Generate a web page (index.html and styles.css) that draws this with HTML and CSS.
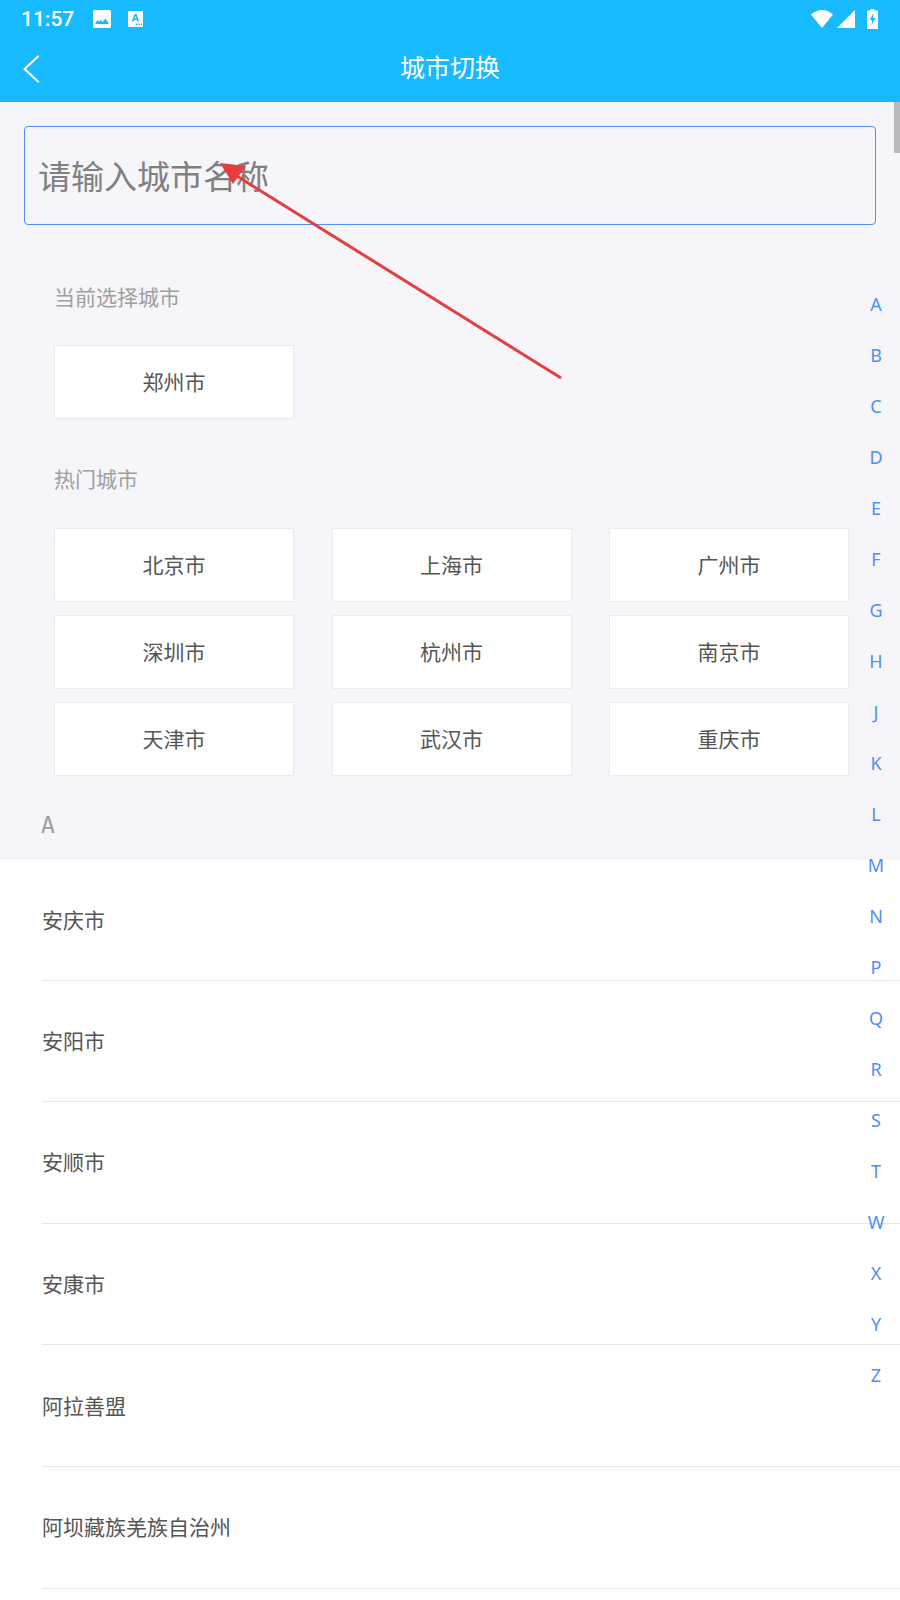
FILE: index.html
```html
<!DOCTYPE html>
<html lang="zh-CN">
<head>
    <meta charset="UTF-8">
    <meta name="viewport" content="width=device-width, initial-scale=1.0">
    <title>城市切换</title>
    <link rel="stylesheet" href="styles.css">
</head>
<body>
    <header class="top">
        <div class="status">
            <span class="time">11:57</span>
            <svg class="st-pic" width="18" height="18" viewBox="0 0 18 18"><path fill="#fff" fill-rule="evenodd" d="M1.500 0h15A1.500 1.500 0 0 1 18 1.500v15a1.500 1.500 0 0 1-1.500 1.500h-15A1.500 1.500 0 0 1 0 16.500v-15A1.500 1.500 0 0 1 1.500 0zM2 14h14l-3.500-5.500-3 3.500-2-2-1.500 1.500-1.500-1.500z"/></svg>
            <svg class="st-a" width="15" height="16" viewBox="0 0 15 16"><path fill="#fff" fill-rule="evenodd" d="M1 0h13a1 1 0 0 1 1 1v14a1 1 0 0 1-1 1H1a1 1 0 0 1-1-1V1a1 1 0 0 1 1-1zM6.500 3 3.800 10.500h1.700l.5-1.500h3l.5 1.500h1.700L8.500 3zM6.500 7.600 7.500 4.800 8.500 7.600zM8 12.500h1.500V14H8zM10.500 12.500H12V14h-1.500zM13 12.500h1V14h-1z"/></svg>
            <span class="st-right">
                <svg width="22" height="18" viewBox="0 0 22 18"><path fill="#fff" d="M0 4.500C3 1.800 6.800 0 11 0s8 1.800 11 4.500L11 18z"/></svg>
                <svg width="18" height="18" viewBox="0 0 18 18"><path fill="#fff" d="M18 0v18H0z"/></svg>
                <svg width="11" height="20" viewBox="0 0 11 20"><path fill="#fff" fill-rule="evenodd" d="M3.500 0h4v1.500H11V20H0V1.500h3.500zM6.500 4 2.800 11h2.400l-.7 5.500L8.400 9H6z"/></svg>
            </span>
        </div>
        <div class="bar">
            <svg class="back" width="18" height="28" viewBox="0 0 18 28"><path d="M16 1.500 2.500 14 16 26.500" fill="none" stroke="#fff" stroke-width="2.200" stroke-linecap="round" stroke-linejoin="round"/></svg>
            <h1>城市切换</h1>
        </div>
    </header>

    <main>
        <div class="search">
            <input type="text" placeholder="请输入城市名称">
        </div>

        <section class="hot">
            <h2>当前选择城市</h2>
            <div class="grid">
                <a class="card">郑州市</a>
            </div>
            <h2 class="second">热门城市</h2>
            <div class="grid">
                <a class="card">北京市</a>
                <a class="card">上海市</a>
                <a class="card">广州市</a>
                <a class="card">深圳市</a>
                <a class="card">杭州市</a>
                <a class="card">南京市</a>
                <a class="card">天津市</a>
                <a class="card">武汉市</a>
                <a class="card">重庆市</a>
            </div>
        </section>

        <div class="letter">A</div>
        <ul class="cities">
            <li>安庆市</li>
            <li>安阳市</li>
            <li>安顺市</li>
            <li>安康市</li>
            <li>阿拉善盟</li>
            <li>阿坝藏族羌族自治州</li>
        </ul>
    </main>

    <ul class="index">
        <li>A</li><li>B</li><li>C</li><li>D</li><li>E</li><li>F</li><li>G</li><li>H</li><li>J</li><li>K</li><li>L</li><li>M</li><li>N</li><li>P</li><li>Q</li><li>R</li><li>S</li><li>T</li><li>W</li><li>X</li><li>Y</li><li>Z</li>
    </ul>

    <div class="scroll"></div>

    <svg class="arrow" width="900" height="400" viewBox="0 0 900 400">
        <path d="M561 378 232 173" stroke="#e53e3e" stroke-width="3" fill="none"/>
        <path d="M220 163 246 166 233 184z" fill="#e53e3e"/>
    </svg>
</body>
</html>
```

FILE: styles.css
```css
html, body {
    margin: 0;
    padding: 0;
}

body {
    position: relative;
    height: 1600px;
    overflow: hidden;
    background-color: #fff;
    font-family: "Noto Sans CJK SC", "Noto Sans", sans-serif;
    color: #555;
}

.top {
    height: 102px;
    background-color: #17b9ff;
    color: #fff;
}

.status {
    display: flex;
    align-items: center;
    height: 38px;
    padding: 0 22px 0 21px;
}

.time {
    font-family: Roboto, sans-serif;
    font-size: 21px;
    font-weight: 500;
}

.st-pic {
    margin-left: 19px;
}

.st-a {
    margin-left: 17px;
}

.st-right {
    display: flex;
    align-items: center;
    gap: 4px;
    margin-left: auto;
}

.st-right svg:last-child {
    margin-left: 8px;
}

.bar {
    position: relative;
    display: flex;
    align-items: center;
    justify-content: center;
    height: 58px;
    padding-bottom: 2px;
    box-sizing: border-box;
}

.bar h1 {
    margin: 0;
    font-size: 25px;
    font-weight: 400;
}

.back {
    position: absolute;
    left: 22px;
    top: 17px;
}

main {
    background-color: #f5f5fa;
}

.search {
    padding: 24px 24px 0;
}

.search input {
    display: block;
    box-sizing: border-box;
    width: 852px;
    height: 99px;
    padding: 0 13px 2px;
    border: 1px solid #4f8ff7;
    border-radius: 4px;
    background: transparent;
    font-family: inherit;
    font-size: 33px;
    outline: none;
}

.search input::placeholder {
    color: #808080;
    opacity: 1;
}

.hot {
    padding: 53px 0 0 54px;
}

.hot h2 {
    margin: 0 0 31px;
    font-size: 21px;
    line-height: 36px;
    font-weight: 400;
    color: #a0a0a0;
}

.hot h2.second {
    margin: 41px 0 32px;
}

.grid {
    display: grid;
    grid-template-columns: repeat(3, 240px);
    column-gap: 37.500px;
    row-gap: 13px;
}

.card {
    display: flex;
    align-items: center;
    justify-content: center;
    box-sizing: border-box;
    height: 74px;
    padding-bottom: 3px;
    border: 1px solid #ebebef;
    background-color: #fff;
    font-size: 21px;
}

.letter {
    height: 84px;
    padding: 33px 0 0 41px;
    box-sizing: border-box;
    font-family: "DejaVu Sans Mono", monospace;
    font-size: 23px;
    line-height: 32px;
    color: #a0a0a0;
}

.cities {
    margin: 0;
    padding: 0 0 0 42px;
    list-style-type: none;
    background-color: #fff;
}

.cities li {
    display: flex;
    align-items: center;
    box-sizing: border-box;
    height: 121.600px;
    padding-bottom: 2px;
    border-bottom: 1px solid #e8e8e8;
    font-size: 21px;
}

.cities li:first-child {
    height: 120.600px;
}

.index {
    position: absolute;
    top: 280px;
    right: 10px;
    width: 28px;
    margin: 0;
    padding: 0;
    list-style-type: none;
    font-family: "Noto Sans", sans-serif;
    font-size: 18px;
    color: #4f8ff7;
    text-align: center;
}

.index li {
    height: 51px;
    line-height: 49px;
}

.scroll {
    position: absolute;
    top: 102px;
    right: 0;
    width: 6px;
    height: 51px;
    background-color: #b9b8bd;
}

.arrow {
    position: absolute;
    top: 0;
    left: 0;
}
```
